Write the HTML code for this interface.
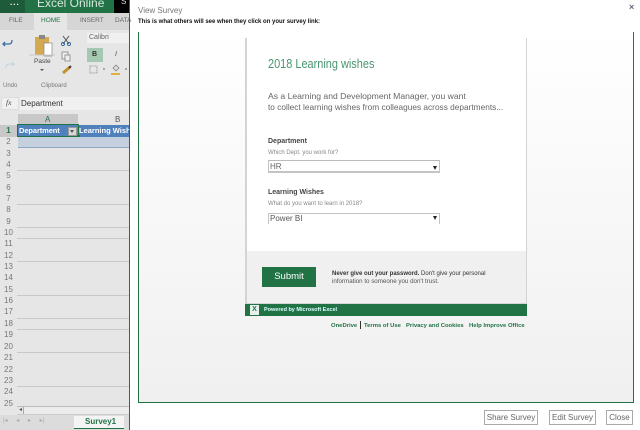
<!DOCTYPE html>
<html><head><meta charset="utf-8"><style>
html,body{margin:0;padding:0}
body{width:640px;height:430px;position:relative;overflow:hidden;background:#fff;font-family:"Liberation Sans",sans-serif;color:#444}
#w{position:absolute;left:0;top:0;width:640px;height:430px;overflow:hidden;filter:blur(.3px)}
.a,.a *{box-sizing:border-box}
.a{position:absolute;white-space:nowrap}
.r{position:absolute;left:0;width:17px;text-align:center;font-size:8px;line-height:10px;color:#777}
.l{position:absolute;left:17px;width:112px;height:1px;background:#c8c8c8}
.t{position:absolute;white-space:nowrap}
.b{position:absolute;top:410px;height:15px;border:1px solid #aaa;background:#fff;font-size:8px;line-height:13px;text-align:center;color:#666;box-sizing:border-box}
</style></head><body><div id="w">
<!-- Excel left -->
<div class="a" style="left:0;top:0;width:130px;height:430px;background:#e6e6e6"></div>
<div class="a" style="left:0;top:0;width:25px;height:13px;background:#1d5b3b"></div>
<div class="a" style="left:25px;top:0;width:89px;height:13px;background:#217346"></div>
<div class="a" style="left:114px;top:0;width:16px;height:13px;background:#000"></div>
<div class="t" style="left:37px;top:-4px;font-size:12px;line-height:14px;color:#d8e8df">Excel Online</div>
<div class="t" style="left:121px;top:-3px;font-size:8px;color:#ddd">S</div>
<div class="t" style="left:10px;top:-2px;font-size:8px;color:#fff;letter-spacing:1px;font-weight:bold">...</div>
<div class="a" style="left:0;top:13px;width:130px;height:17px;background:#d6d6d6"></div>
<div class="a" style="left:34px;top:13px;width:33px;height:18px;background:#e6e6e6"></div>
<div class="t" style="left:9px;top:17px;font-size:6.5px;color:#666">FILE</div>
<div class="t" style="left:41px;top:17px;font-size:6.5px;color:#217346">HOME</div>
<div class="t" style="left:80px;top:17px;font-size:6.5px;color:#666">INSERT</div>
<div class="t" style="left:115px;top:17px;font-size:6.5px;color:#666">DATA</div>
<!-- ribbon icons -->
<svg class="a" style="left:0;top:30px" width="130" height="62" viewBox="0 0 130 62">
<path d="M5 12 L3 14 L5 16 M3 14 H9 Q12 14 12 10" fill="none" stroke="#3a6ea5" stroke-width="1.3"/>
<path d="M12 36 L14 34 L12 32 M14 34 H9 Q6 34 6 38" fill="none" stroke="#c5d5e0" stroke-width="1.2"/>
<rect x="35" y="7" width="14" height="18" fill="#d4a94f"/><rect x="39" y="5" width="6" height="4" fill="#888"/>
<rect x="44" y="13" width="8" height="13" fill="#fff" stroke="#888" stroke-width=".7"/>
<path d="M63 6 L69 14 M69 6 L63 14" stroke="#555" stroke-width="1"/><circle cx="63" cy="14" r="1.6" fill="none" stroke="#3a6ea5"/><circle cx="69" cy="14" r="1.6" fill="none" stroke="#3a6ea5"/>
<rect x="62" y="22" width="6" height="7" fill="#eee" stroke="#777" stroke-width=".7"/><rect x="65" y="25" width="5" height="6" fill="#eee" stroke="#777" stroke-width=".7"/>
<path d="M63 43 L70 37" stroke="#c09030" stroke-width="3"/><path d="M69 38 L71 36" stroke="#444" stroke-width="2"/>
<line x1="29" y1="25" x2="55" y2="25" stroke="#c8c8c8"/>
<rect x="87" y="18" width="16" height="14" fill="#a3c9b3"/>
<rect x="90" y="36" width="7" height="7" fill="none" stroke="#888" stroke-width=".8" stroke-dasharray="1 .6"/>
<path d="M103 39h2M125 39h2" stroke="#666"/>
<path d="M113 38 L116 35 L119 38 L116 41Z" fill="#ddd" stroke="#777" stroke-width=".7"/><rect x="111" y="43" width="9" height="2" fill="#e0b040"/>
<path d="M40 39 L42 41 L44 39Z" fill="#555"/>
</svg>
<div class="a" style="left:87px;top:33px;width:43px;height:10px;background:#f0f0f0"></div>
<div class="t" style="left:89px;top:33px;font-size:7px;line-height:10px;color:#666">Calibri</div>
<div class="t" style="left:92px;top:51px;font-size:7px;font-weight:bold;color:#333">B</div>
<div class="t" style="left:115px;top:51px;font-size:7px;font-style:italic;color:#555">I</div>
<div class="t" style="left:34px;top:58px;font-size:6.5px;color:#444">Paste</div>
<div class="t" style="left:3px;top:83px;font-size:6px;color:#777">Undo</div>
<div class="t" style="left:41px;top:83px;font-size:6px;color:#777">Clipboard</div>
<!-- formula bar -->
<div class="a" style="left:1px;top:97px;width:18px;height:13px;background:#f0f0f0;border:1px solid #ddd"></div>
<div class="t" style="left:6px;top:98px;font-size:7.5px;font-style:italic;font-family:'Liberation Serif',serif;color:#444">fx</div>
<div class="a" style="left:20px;top:97px;width:110px;height:13px;background:#f0f0f0"></div>
<div class="t" style="left:21px;top:98px;font-size:8px;line-height:11px;color:#333">Department</div>
<!-- headers -->
<div class="a" style="left:18px;top:114px;width:60px;height:10px;background:#c8c8c8"></div>
<div class="t" style="left:45px;top:114px;font-size:8px;line-height:11px;color:#217346">A</div>
<div class="t" style="left:115px;top:114px;font-size:8px;line-height:11px;color:#555">B</div>
<div class="a" style="left:18px;top:125px;width:112px;height:12px;background:#4f81bd"></div>
<div class="a" style="left:17px;top:124px;width:62px;height:13px;border:1px solid #217346"></div>
<div class="a" style="left:77px;top:135px;width:3px;height:3px;background:#217346"></div>
<div class="a" style="left:68px;top:127px;width:9px;height:9px;background:#d8d8d8;border:1px solid #999"></div>
<div class="a" style="left:70px;top:130px;width:0;height:0;border:2.5px solid transparent;border-top:3px solid #555"></div>
<div class="t" style="left:19px;top:125px;font-size:7.5px;line-height:11px;font-weight:bold;color:#fff;letter-spacing:-.1px">Department</div>
<div class="a" style="left:79px;top:125px;width:50px;height:12px;overflow:hidden;font-size:7.5px;line-height:11px;font-weight:bold;color:#fff">Learning Wishes</div>
<div class="a" style="left:18px;top:137px;width:112px;height:11px;background:#c5d0de;border-bottom:1px solid #90a8c4"></div>
<div class="r" style="top:125px;color:#217346;font-weight:bold;background:#c8c8c8;height:12px;line-height:11px">1</div>
<div class="r" style="top:137px">2</div><div class="r" style="top:148.5px">3</div><div class="r" style="top:160px">4</div><div class="r" style="top:171px">5</div><div class="r" style="top:182.5px">6</div><div class="r" style="top:194px">7</div><div class="r" style="top:205px">8</div><div class="r" style="top:216.5px">9</div><div class="r" style="top:228px">10</div><div class="r" style="top:239px">11</div><div class="r" style="top:250.5px">12</div><div class="r" style="top:262px">13</div><div class="r" style="top:273px">14</div><div class="r" style="top:284.5px">15</div><div class="r" style="top:296px">16</div><div class="r" style="top:307px">17</div><div class="r" style="top:318.5px">18</div><div class="r" style="top:330px">19</div><div class="r" style="top:341.5px">20</div><div class="r" style="top:353px">21</div><div class="r" style="top:364.5px">22</div><div class="r" style="top:376px">23</div><div class="r" style="top:387px">24</div><div class="r" style="top:398.5px">25</div>
<div class="l" style="top:170px"></div><div class="l" style="top:204px"></div><div class="l" style="top:227px"></div><div class="l" style="top:238px"></div><div class="l" style="top:261px"></div><div class="l" style="top:295px"></div><div class="l" style="top:318px"></div><div class="l" style="top:329px"></div><div class="l" style="top:352px"></div><div class="l" style="top:386px"></div>
<!-- scroll / tabs -->
<div class="a" style="left:17px;top:406px;width:113px;height:9px;background:#e6e6e6;border-top:1px solid #bbb;border-bottom:1px solid #ccc"></div>
<div class="a" style="left:23px;top:407px;width:107px;height:7px;border-left:1px solid #aaa;background:#ececec"></div>
<div class="t" style="left:19px;top:406px;font-size:6px;line-height:9px;color:#555">◂</div>
<div class="a" style="left:0;top:415px;width:130px;height:15px;background:#dcdcdc"></div>
<div class="t" style="left:3px;top:417px;font-size:6px;word-spacing:7px;color:#aaa">|◂ ◂ ▸ ▸|</div>
<div class="a" style="left:74px;top:416px;width:50px;height:13px;background:#f4f4f4;border-bottom:1px solid #217346"></div>
<div class="t" style="left:85px;top:417px;font-size:8px;line-height:10px;font-weight:bold;color:#217346">Survey1</div>
<!-- modal -->
<div class="a" style="left:129px;top:0;width:1px;height:430px;background:#217346"></div>
<div class="t" style="left:138px;top:5px;font-size:8px;line-height:11px;color:#777">View Survey</div>
<div class="t" style="left:138px;top:18px;font-size:6px;line-height:9px;font-weight:bold;color:#111">This is what others will see when they click on your survey link:</div>
<div class="t" style="left:629px;top:1px;font-size:9px;line-height:12px;font-weight:bold;color:#667">×</div>
<div class="a" style="left:138px;top:32px;width:496px;height:371px;border-bottom:1px solid #217346;background:linear-gradient(#fff,#f0f0f0)"></div>
<div class="a" style="left:138px;top:32px;width:1px;height:371px;background:#217346"></div>
<div class="a" style="left:633px;top:32px;width:1px;height:371px;background:#217346"></div>
<!-- card -->
<div class="a" style="left:245px;top:38px;width:282px;height:213px;background:#fff;border-left:2px solid #d4d4d4;border-right:1px solid #d4d4d4"></div>
<div class="t" style="left:268px;top:56px;font-size:12.5px;line-height:17px;color:#4a9470;transform:scaleX(.875);transform-origin:0 0">2018 Learning wishes</div>
<div class="t" style="left:268px;top:91px;font-size:8.6px;line-height:11px;color:#666">As a Learning and Development Manager, you want</div>
<div class="t" style="left:268px;top:102px;font-size:8.3px;line-height:11px;color:#666">to collect learning wishes from colleagues across departments...</div>
<div class="t" style="left:268px;top:137px;font-size:7px;line-height:9px;font-weight:bold;color:#444">Department</div>
<div class="t" style="left:268px;top:149px;font-size:6px;line-height:9px;color:#888">Which Dept. you work for?</div>
<div class="a" style="left:268px;top:160px;width:172px;height:13px;border:1px solid #c4c4c4;border-top-color:#bbb;border-bottom-width:2px"></div>
<div class="t" style="left:270px;top:162px;font-size:8px;line-height:10px;color:#666">HR</div>
<div class="a" style="left:433px;top:166px;width:0;height:0;border:2px solid transparent;border-top:4px solid #222"></div>
<div class="t" style="left:268px;top:188px;font-size:7px;line-height:9px;font-weight:bold;color:#444">Learning Wishes</div>
<div class="t" style="left:268px;top:200px;font-size:6px;line-height:9px;color:#888">What do you want to learn in 2018?</div>
<div class="a" style="left:268px;top:213px;width:172px;height:11px;border:1px solid #c4c4c4;border-bottom:0"></div>
<div class="t" style="left:270px;top:214px;font-size:8px;line-height:10px;color:#555">Power BI</div>
<div class="a" style="left:433px;top:216px;width:0;height:0;border:2px solid transparent;border-top:4px solid #222"></div>
<!-- footer -->
<div class="a" style="left:245px;top:251px;width:282px;height:53px;background:#f0f0f0;border-left:2px solid #d4d4d4;border-right:1px solid #d4d4d4;border-bottom:1px solid #d4d4d4"></div>
<div class="a" style="left:262px;top:267px;width:54px;height:20px;background:#217346;color:#fff;font-size:9.5px;line-height:20px;text-align:center">Submit</div>
<div class="t" style="left:332px;top:270px;font-size:6px;line-height:8px;color:#333"><b>Never give out your password.</b> Don't give your personal</div>
<div class="t" style="left:332px;top:278px;font-size:6.2px;line-height:8px;color:#555">information to someone you don't trust.</div>
<div class="a" style="left:245px;top:304px;width:282px;height:12px;background:#217346"></div>
<div class="a" style="left:250px;top:305px;width:9px;height:10px;background:#e8f0ec;color:#217346;font-size:7px;line-height:10px;text-align:center;font-weight:bold">X</div>
<div class="t" style="left:264px;top:306px;font-size:5.5px;line-height:8px;font-weight:bold;color:#dff">Powered by Microsoft Excel</div>
<div class="t" style="left:331px;top:322px;font-size:5.9px;line-height:8px;color:#217346;font-weight:bold">OneDrive</div>
<div class="a" style="left:360px;top:321px;width:1px;height:8px;background:#333"></div>
<div class="t" style="left:364px;top:322px;font-size:5.9px;line-height:8px;color:#217346;font-weight:bold">Terms of Use</div>
<div class="t" style="left:406px;top:322px;font-size:5.9px;line-height:8px;color:#217346;font-weight:bold">Privacy and Cookies</div>
<div class="t" style="left:469px;top:322px;font-size:5.9px;line-height:8px;color:#217346;font-weight:bold">Help Improve Office</div>
<!-- buttons -->
<div class="b" style="left:484px;width:54px">Share Survey</div>
<div class="b" style="left:549px;width:47px">Edit Survey</div>
<div class="b" style="left:606px;width:27px">Close</div>
</div></body></html>
